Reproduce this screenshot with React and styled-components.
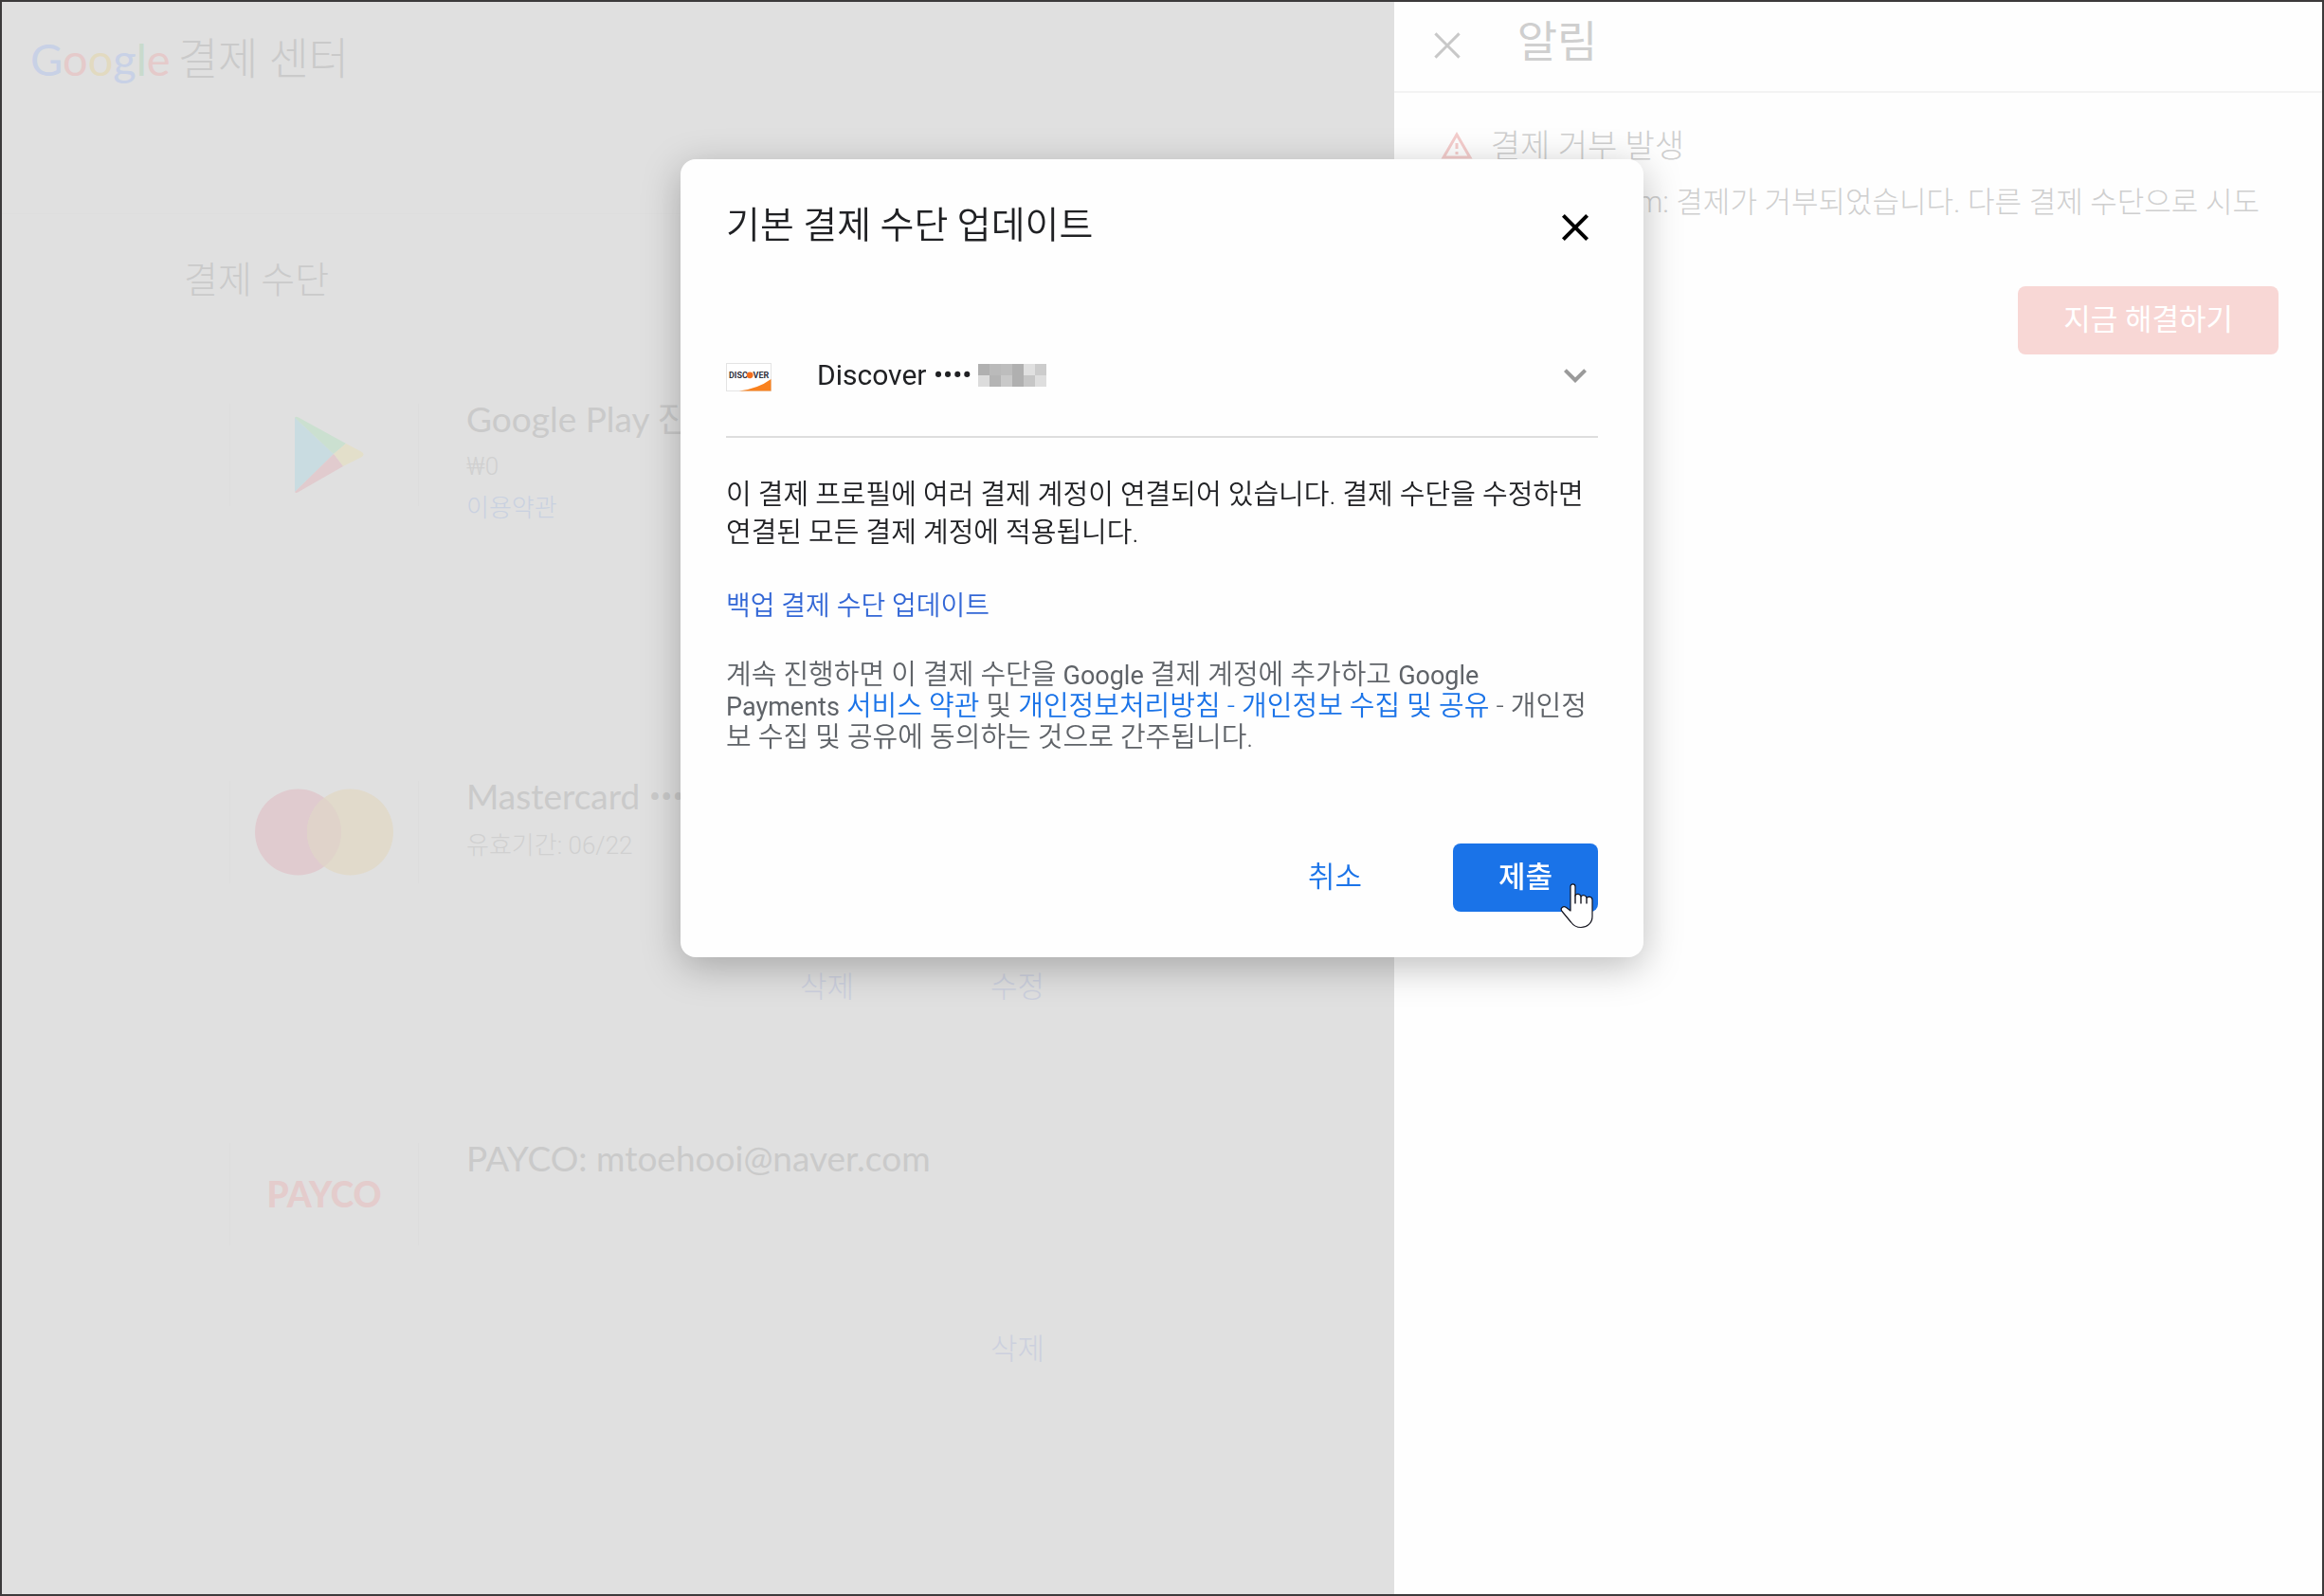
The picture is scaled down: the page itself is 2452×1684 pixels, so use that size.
import React from "react";
import styled, { createGlobalStyle } from "styled-components";

const GlobalStyle = createGlobalStyle`
  *, *::before, *::after { box-sizing: border-box; }
  body {
    margin: 0;
    font-family: Roboto, "Noto Sans CJK KR", sans-serif;
    font-size: 29px;
    color: #202124;
  }
  h1, h2, h3, p, ul { margin: 0; padding: 0; font-weight: 400; }
  ul { list-style: none; }
  button { font: inherit; border: 0; padding: 0; background: none; cursor: pointer; }
  a { text-decoration: none; }
  svg { display: block; }
`;

const Page = styled.div`
  display: grid;
  grid-template-columns: 3fr 2fr;
  min-height: 100vh;
  border: 2px solid #3c3a3b;
  background: #e0e0e0;
`;

/* ---------- payment centre (dimmed) ---------- */

const Main = styled.main`
  min-width: 0;
  color: #cacaca;
`;

const TopBar = styled.header`
  display: flex;
  align-items: center;
  gap: 8px;
  height: 224px;
  padding: 0 30px 104px;
  border-bottom: 1px solid #dedede;
`;

const Brand = styled.span`
  font-family: Lato, sans-serif;
  font-size: 47px;
  line-height: 56px;
`;

const BrandLetter = styled.span`
  color: ${(p) => p.$color};
`;

const SiteName = styled.h1`
  font-size: 46px;
  line-height: 56px;
  font-weight: 300;
`;

const Methods = styled.section`
  padding: 40px 48px 0 192px;
`;

const SectionTitle = styled.h2`
  font-size: 39px;
  line-height: 60px;
  font-weight: 300;
`;

const MethodList = styled.ul`
  max-width: 956px;
  padding: 100px 0 0 48px;
`;

const Method = styled.li`
  display: flex;
  flex-direction: column;
  min-height: ${(p) => (p.$tall ? 398 : 382)}px;
`;

const MethodBody = styled.div`
  display: flex;
  gap: 50px;
  height: 182px;
`;

const LogoBox = styled.div`
  display: flex;
  align-items: center;
  justify-content: center;
  flex: none;
  width: 200px;
  height: 108px;
  border: solid #dddddd;
  border-width: 0 1px;
`;

const PaycoMark = styled.span`
  font-family: Lato, sans-serif;
  font-size: 37px;
  line-height: 40px;
  font-weight: 900;
  color: #e4cccc;
`;

const MethodName = styled.h3`
  font-family: Lato, "Noto Sans CJK KR", sans-serif;
  font-size: 37px;
  line-height: 32px;
  padding-bottom: 12px;
  white-space: nowrap;
`;

const Dots = styled.span`
  font-family: Roboto, sans-serif;
`;

const MethodMeta = styled.p`
  font-size: 26px;
  line-height: 44px;
  font-weight: 300;
  color: #d0d0d0;
`;

const FaintLink = styled.a`
  color: #c9d1e0;
`;

const MethodActions = styled.div`
  display: flex;
  justify-content: flex-end;
  gap: 48px;
`;

const FaintButton = styled.button`
  height: 72px;
  padding: 0 48px;
  font-size: 31px;
  line-height: 40px;
  font-weight: 300;
  color: #ccd0de;
`;

/* ---------- notification panel (dimmed) ---------- */

const Panel = styled.aside`
  min-width: 0;
  background: #fefefe;
  color: #cfcfcf;
`;

const PanelHeader = styled.header`
  display: flex;
  align-items: center;
  gap: 50px;
  height: 96px;
  padding: 0 32px 2px;
  border-bottom: 2px solid #f3f3f3;
`;

const IconButton = styled.button`
  flex: none;
  width: 48px;
  height: 48px;
  color: ${(p) => p.$color};
`;

const PanelTitle = styled.h2`
  font-size: 46px;
  line-height: 56px;
  padding-bottom: 8px;
`;

const Alert = styled.article`
  display: flex;
  flex-direction: column;
  padding: 30px 46px 0 48px;
`;

const AlertTitle = styled.h3`
  display: flex;
  align-items: center;
  gap: 18px;
  font-size: 34px;
  line-height: 52px;
  font-weight: 300;
`;

const AlertText = styled.p`
  padding: 14px 0 0 208px;
  font-size: 31px;
  line-height: 40px;
  font-weight: 300;
  white-space: nowrap;
`;

const SolidButton = styled.button`
  height: 72px;
  padding: 0 48px;
  border-radius: 8px;
  font-size: 31px;
  line-height: 40px;
  font-weight: ${(p) => p.$weight};
  color: #ffffff;
  background: ${(p) => p.$bg};
`;

const AlertActions = styled.div`
  display: flex;
  justify-content: flex-end;
  padding-top: 68px;
`;

/* ---------- dialog ---------- */

const Overlay = styled.div`
  position: fixed;
  inset: 0;
  display: flex;
  align-items: flex-start;
  justify-content: center;
  padding: 168px 24px 24px;
`;

const Dialog = styled.div`
  width: 100%;
  max-width: 1016px;
  padding: 48px;
  border-radius: 16px;
  background: #fefefe;
  box-shadow: 0 10px 40px rgba(0, 0, 0, 0.26);
`;

const DialogHeader = styled.header`
  display: flex;
  align-items: center;
  justify-content: space-between;
  margin-bottom: 68px;
`;

const DialogTitle = styled.h2`
  font-size: 39px;
  line-height: 44px;
  padding-bottom: 4px;
  font-weight: 350;
`;

const CardField = styled.div`
  display: flex;
  align-items: center;
  height: 130px;
  border-bottom: 2px solid #dedede;
`;

const CardSelect = styled.select`
  appearance: none;
  margin: 0 6px 0 48px;
  padding: 0 0 2px;
  border: 0;
  font: inherit;
  font-size: 30px;
  color: #202124;
  background: transparent;
`;

const Mosaic = styled.span`
  display: grid;
  grid-template-columns: repeat(6, 12px);
  grid-auto-rows: 12px;
`;

const MosaicCell = styled.span`
  background: ${(p) => p.$color};
`;

const Chevron = styled.span`
  margin-left: auto;
  color: #9a9a9a;
`;

const Notice = styled.p`
  margin-top: 40px;
  font-size: 29px;
  line-height: 40px;
  font-weight: 350;
`;

const BackupLine = styled.p`
  margin: 38px 0 36px;
  font-size: 28px;
  line-height: 40px;
  font-weight: 350;
`;

const BackupLink = styled.a`
  color: #3367d6;
`;

const Legal = styled.p`
  font-size: 29px;
  line-height: 32px;
  font-weight: 350;
  color: #5f6368;
`;

const Latin = styled.span`
  font-size: 27px;
  font-weight: 400;
`;

const LegalLink = styled.a`
  color: #1a73e8;
`;

const DialogActions = styled.footer`
  display: flex;
  justify-content: flex-end;
  gap: 48px;
  margin-top: 96px;
`;

const TextButton = styled.button`
  height: 72px;
  padding: 0 48px;
  font-size: 31px;
  line-height: 40px;
  font-weight: 350;
  color: #1a73e8;
`;

const SubmitSlot = styled.div`
  position: relative;
`;

const Cursor = styled.svg`
  position: absolute;
  right: 4px;
  bottom: -18px;
  pointer-events: none;
`;

const BRAND = [
  ["G", "#c8d1e6"],
  ["o", "#e5caca"],
  ["o", "#e2dac0"],
  ["g", "#c8d1e6"],
  ["l", "#c8dacd"],
  ["e", "#e5caca"],
];

const MOSAIC = [
  "#b0b0b0", "#bababa", "#bdbdbd", "#b0b0b0", "#e0e0e0", "#cccccc",
  "#dcdcdc", "#b4b4b4", "#c9c9c9", "#b0b0b0", "#c6c6c6", "#dedede",
];

const CloseIcon = ({ thin }) => (
  <svg width="48" height="48" viewBox="0 0 24 24" aria-hidden="true">
    <path
      d="M5.7 5.7 18.3 18.3M18.3 5.7 5.7 18.3"
      stroke="currentColor"
      strokeWidth={thin ? 1.5 : 2}
      fill="none"
    />
  </svg>
);

const PlayLogo = () => (
  <svg width="84" height="82" viewBox="0 0 84 82" aria-label="Google Play" role="img">
    <path d="M11 1.5V80L52 40Z" fill="#c9dce1" />
    <path d="M11 1.5Q12 0 15 1.5L65 29 52 40Z" fill="#cbe0d0" />
    <path d="M65 29 82 38Q85 40.500 82 43L62 53 52 40Z" fill="#e3dfca" />
    <path d="M11 80Q12 82 15 80L62 53 52 40Z" fill="#e1cbce" />
  </svg>
);

const MastercardLogo = () => (
  <svg width="146" height="92" viewBox="0 0 146 92" aria-label="Mastercard" role="img">
    <circle cx="45.500" cy="46" r="45.500" fill="#e0cbcf" />
    <circle cx="100.500" cy="46" r="45.500" fill="#e1dacb" />
    <path d="M73 9.700A45.500 45.500 0 0 1 73 82.300A45.500 45.500 0 0 1 73 9.700Z" fill="#e0d3ca" />
  </svg>
);

const WarningIcon = () => (
  <svg width="36" height="36" viewBox="0 0 24 24" fill="#f4cdcc" aria-hidden="true">
    <path d="M12 5.990 19.530 19H4.470L12 5.990M12 2 1 21h22L12 2zm1 14h-2v2h2v-2zm0-6h-2v4h2v-4z" />
  </svg>
);

const DiscoverLogo = () => (
  <svg width="48" height="34" viewBox="0 -4 48 34" aria-label="Discover" role="img">
    <rect x="0.500" y="0.500" width="47" height="29" fill="#fff" stroke="#e4e4e4" />
    <path d="M14 29.500Q34 27 47.500 17V29.500Z" fill="#f9811e" />
    <text
      x="3"
      y="16"
      fontFamily="Roboto, sans-serif"
      fontSize="9"
      fontWeight="700"
      fill="#32323c"
    >
      DISC
    </text>
    <circle cx="25.200" cy="12.800" r="3.400" fill="#f4701f" />
    <text
      x="28.500"
      y="16"
      fontFamily="Roboto, sans-serif"
      fontSize="9"
      fontWeight="700"
      fill="#32323c"
    >
      VER
    </text>
  </svg>
);

const HandCursor = () => (
  <Cursor width="36" height="48" viewBox="0 0 36 48" aria-hidden="true">
    <path
      d="M11 29V3.500C11 0 16 0 16 3.500V13C17 10.600 21.500 10.800 22 14C23.500 11.800 27.500 12.300 28 15.500C29.500 13.500 34 14 34 17.500V35C34 42 28.500 46.500 22 46.500C16.500 46.500 14 44.500 11.500 41L2 29.500C-0.500 26 3.500 23.500 6.500 25.500Z"
      fill="#fff"
      stroke="#14141e"
      strokeWidth="1.200"
      strokeLinejoin="round"
    />
    <path d="M16 12.500V21.500M22 14V21.500M28 15.500V21.500" stroke="#14141e" strokeWidth="1.400" fill="none" />
  </Cursor>
);

export default function App() {
  return (
    <>
      <GlobalStyle />
      <Page>
        <Main>
          <TopBar>
            <Brand>
              {BRAND.map(([letter, color], i) => (
                <BrandLetter key={i} $color={color}>{letter}</BrandLetter>
              ))}
            </Brand>
            <SiteName>결제 센터</SiteName>
          </TopBar>
          <Methods>
            <SectionTitle>결제 수단</SectionTitle>
            <MethodList>
              <Method $tall>
                <MethodBody>
                  <LogoBox><PlayLogo /></LogoBox>
                  <div>
                    <MethodName>Google Play 잔액</MethodName>
                    <MethodMeta>₩0</MethodMeta>
                    <MethodMeta><FaintLink href="#terms">이용약관</FaintLink></MethodMeta>
                  </div>
                </MethodBody>
              </Method>
              <Method>
                <MethodBody>
                  <LogoBox><MastercardLogo /></LogoBox>
                  <div>
                    <MethodName>Mastercard <Dots>••••</Dots></MethodName>
                    <MethodMeta>유효기간: 06/22</MethodMeta>
                  </div>
                </MethodBody>
                <MethodActions>
                  <FaintButton type="button">삭제</FaintButton>
                  <FaintButton type="button">수정</FaintButton>
                </MethodActions>
              </Method>
              <Method>
                <MethodBody>
                  <LogoBox><PaycoMark>PAYCO</PaycoMark></LogoBox>
                  <div>
                    <MethodName>PAYCO: mtoehooi@naver.com</MethodName>
                  </div>
                </MethodBody>
                <MethodActions>
                  <FaintButton type="button">삭제</FaintButton>
                </MethodActions>
              </Method>
            </MethodList>
          </Methods>
        </Main>

        <Panel>
          <PanelHeader>
            <IconButton type="button" aria-label="알림 닫기" $color="#c8c8c8">
              <CloseIcon thin />
            </IconButton>
            <PanelTitle>알림</PanelTitle>
          </PanelHeader>
          <Alert>
            <AlertTitle>
              <WarningIcon />
              결제 거부 발생
            </AlertTitle>
            <AlertText>m: 결제가 거부되었습니다. 다른 결제 수단으로 시도</AlertText>
            <AlertActions>
              <SolidButton type="button" $bg="#f8d7d5" $weight={400}>지금 해결하기</SolidButton>
            </AlertActions>
          </Alert>
        </Panel>
      </Page>

      <Overlay>
        <Dialog role="dialog" aria-modal="true" aria-labelledby="dialog-title">
          <DialogHeader>
            <DialogTitle id="dialog-title">기본 결제 수단 업데이트</DialogTitle>
            <IconButton type="button" aria-label="닫기" $color="#000000">
              <CloseIcon />
            </IconButton>
          </DialogHeader>
          <CardField>
            <DiscoverLogo />
            <CardSelect aria-label="결제 수단" defaultValue="discover">
              <option value="discover">Discover ••••</option>
            </CardSelect>
            <Mosaic aria-hidden="true">
              {MOSAIC.map((color, i) => (
                <MosaicCell key={i} $color={color} />
              ))}
            </Mosaic>
            <Chevron>
              <svg width="48" height="48" viewBox="0 0 24 24" fill="currentColor" aria-hidden="true">
                <path d="M16.590 8.590 12 13.170 7.410 8.590 6 10l6 6 6-6z" />
              </svg>
            </Chevron>
          </CardField>
          <Notice>
            이 결제 프로필에 여러 결제 계정이 연결되어 있습니다. 결제 수단을 수정하면 연결된 모든 결제 계정에 적용됩니다.
          </Notice>
          <BackupLine>
            <BackupLink href="#backup">백업 결제 수단 업데이트</BackupLink>
          </BackupLine>
          <Legal>
            계속 진행하면 이 결제 수단을 <Latin>Google</Latin> 결제 계정에 추가하고 <Latin>Google</Latin>
            <br />
            <Latin>Payments</Latin> <LegalLink href="#tos">서비스 약관</LegalLink> 및{" "}
            <LegalLink href="#privacy">개인정보처리방침 - 개인정보 수집 및 공유</LegalLink> - 개인정보 수집 및 공유에
            동의하는 것으로 간주됩니다.
          </Legal>
          <DialogActions>
            <TextButton type="button">취소</TextButton>
            <SubmitSlot>
              <SolidButton type="button" $bg="#1a73e8" $weight={500}>제출</SolidButton>
              <HandCursor />
            </SubmitSlot>
          </DialogActions>
        </Dialog>
      </Overlay>
    </>
  );
}
